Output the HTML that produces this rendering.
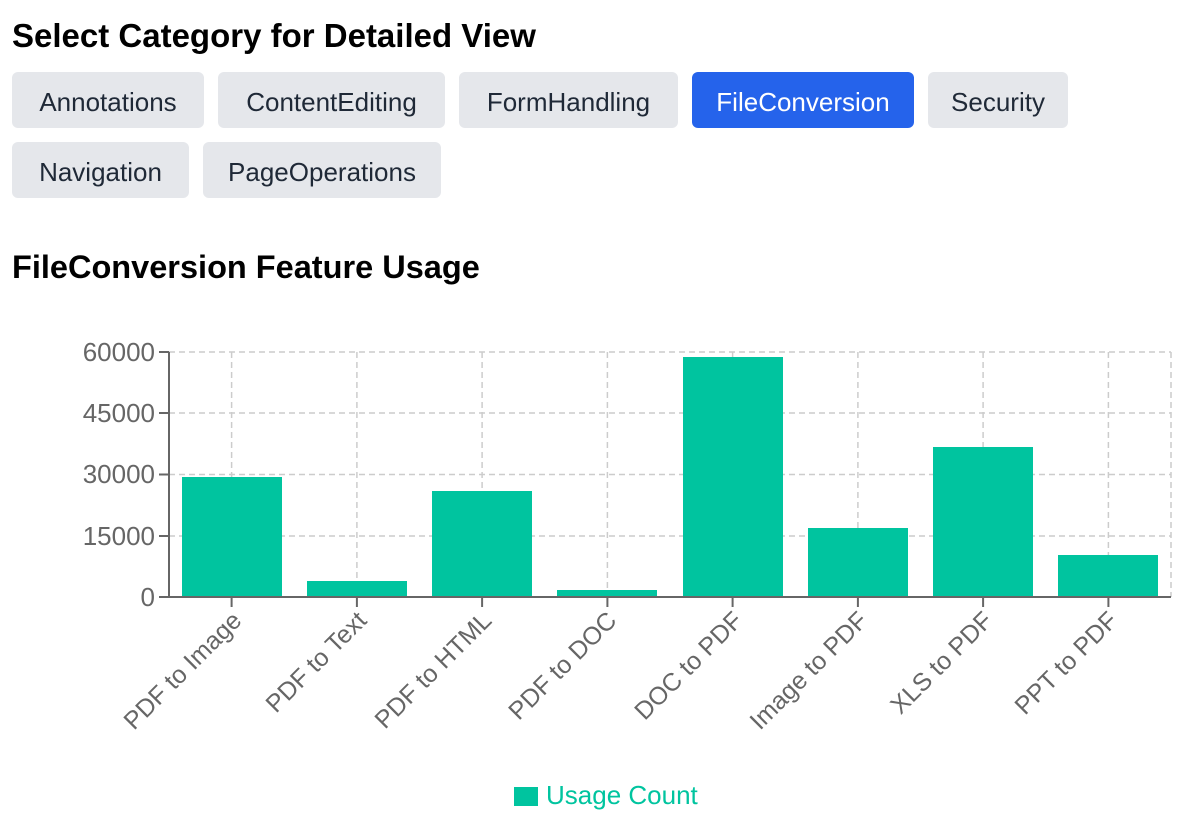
<!DOCTYPE html>
<html><head><meta charset="utf-8"><style>
body{margin:0;background:#fff;font-family:"Liberation Sans",sans-serif;width:1204px;height:821px;position:relative;overflow:hidden}
h1,h2{position:absolute;left:12px;margin:0;font-weight:bold;color:#000}
.b{position:absolute;height:56px;line-height:60px;text-align:center;background:#e5e7eb;color:#1f2937;border-radius:6px;font-size:26px}
.a{background:#2563eb;color:#fff}
</style></head><body>
<h1 style="top:17px;font-size:33px">Select Category for Detailed View</h1>
<div class="b" style="left:12px;top:72px;width:192px">Annotations</div>
<div class="b" style="left:218px;top:72px;width:227px">ContentEditing</div>
<div class="b" style="left:459px;top:72px;width:219px">FormHandling</div>
<div class="b a" style="left:692px;top:72px;width:222px">FileConversion</div>
<div class="b" style="left:928px;top:72px;width:140px">Security</div>
<div class="b" style="left:12px;top:142px;width:177px">Navigation</div>
<div class="b" style="left:203px;top:142px;width:238px">PageOperations</div>
<h2 style="top:249px;font-size:32.5px">FileConversion Feature Usage</h2>
<svg width="1204" height="821" style="position:absolute;left:0;top:0" font-family="Liberation Sans,sans-serif">
<g stroke="#ccc" stroke-dasharray="6 4" stroke-width="1.5">
<line x1="169" y1="352" x2="1171" y2="352"/><line x1="169" y1="413" x2="1171" y2="413"/><line x1="169" y1="474.5" x2="1171" y2="474.5"/><line x1="169" y1="536" x2="1171" y2="536"/>
<line x1="231.6" y1="352" x2="231.6" y2="597"/><line x1="356.9" y1="352" x2="356.9" y2="597"/><line x1="482.1" y1="352" x2="482.1" y2="597"/><line x1="607.4" y1="352" x2="607.4" y2="597"/><line x1="732.6" y1="352" x2="732.6" y2="597"/><line x1="857.9" y1="352" x2="857.9" y2="597"/><line x1="983.1" y1="352" x2="983.1" y2="597"/><line x1="1108.4" y1="352" x2="1108.4" y2="597"/><line x1="1171" y1="352" x2="1171" y2="597"/>
</g>
<g fill="#00c49f">
<rect x="182" y="477" width="100" height="120"/>
<rect x="307" y="581" width="100" height="16"/>
<rect x="432" y="491" width="100" height="106"/>
<rect x="557" y="590" width="100" height="7"/>
<rect x="683" y="357" width="100" height="240"/>
<rect x="808" y="528" width="100" height="69"/>
<rect x="933" y="447" width="100" height="150"/>
<rect x="1058" y="555" width="100" height="42"/>
</g>
<g stroke="#666" stroke-width="2">
<line x1="169" y1="352" x2="169" y2="597"/><line x1="169" y1="597" x2="1171" y2="597"/>
<line x1="159" y1="352" x2="169" y2="352"/><line x1="159" y1="413" x2="169" y2="413"/><line x1="159" y1="474.5" x2="169" y2="474.5"/><line x1="159" y1="536" x2="169" y2="536"/><line x1="159" y1="597" x2="169" y2="597"/>
<line x1="231.6" y1="597" x2="231.6" y2="607"/><line x1="356.9" y1="597" x2="356.9" y2="607"/><line x1="482.1" y1="597" x2="482.1" y2="607"/><line x1="607.4" y1="597" x2="607.4" y2="607"/><line x1="732.6" y1="597" x2="732.6" y2="607"/><line x1="857.9" y1="597" x2="857.9" y2="607"/><line x1="983.1" y1="597" x2="983.1" y2="607"/><line x1="1108.4" y1="597" x2="1108.4" y2="607"/>
</g>
<g fill="#666" font-size="26" text-anchor="end">
<text x="155" y="361">60000</text><text x="155" y="422">45000</text><text x="155" y="483">30000</text><text x="155" y="545">15000</text><text x="155" y="606">0</text>
</g>
<g fill="#666" font-size="25" text-anchor="end">
<text transform="translate(243,622) rotate(-45)">PDF to Image</text>
<text transform="translate(368,622) rotate(-45)">PDF to Text</text>
<text transform="translate(493,622) rotate(-45)">PDF to HTML</text>
<text transform="translate(618,622) rotate(-45)">PDF to DOC</text>
<text transform="translate(744,622) rotate(-45)">DOC to PDF</text>
<text transform="translate(869,622) rotate(-45)">Image to PDF</text>
<text transform="translate(994,622) rotate(-45)">XLS to PDF</text>
<text transform="translate(1119,622) rotate(-45)">PPT to PDF</text>
</g>
<rect x="514" y="787" width="24" height="19" fill="#00c49f"/>
<text x="546" y="804" fill="#00c49f" font-size="26">Usage Count</text>
</svg>
</body></html>
